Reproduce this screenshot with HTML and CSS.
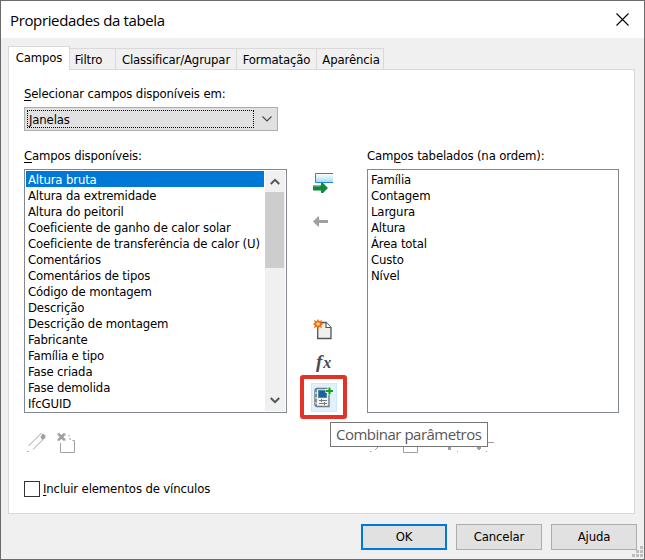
FILE: index.html
```html
<!DOCTYPE html>
<html lang="pt">
<head>
<meta charset="utf-8">
<title>Propriedades da tabela</title>
<link rel="stylesheet" href="styles.css">
</head>
<body>
<main class="dialog">
  <header class="titlebar">
    <h1 class="title">Propriedades da tabela</h1>
    <svg class="close" width="13" height="13" viewBox="0 0 13 13"><path d="M.5.5l12 12M12.500.5l-12 12" stroke="#000" stroke-width="1.1" fill="none"/></svg>
  </header>
  <nav class="tabs">
    <span class="tab active">Campos</span>
    <span class="tab filter">Filtro</span>
    <span class="tab sort">Classificar/Agrupar</span>
    <span class="tab format">Formatação</span>
    <span class="tab look">Aparência</span>
  </nav>
  <section class="panel">
    <div class="label select-label"><u>S</u>elecionar campos disponíveis em:</div>
    <div class="combo">
      <span class="combo-value">Janelas</span>
      <svg width="10" height="6" viewBox="0 0 10 6"><path d="M.5.5L5 5 9.500.5" fill="none" stroke="#444" stroke-width="1.1"/></svg>
    </div>
    <div class="columns">
      <div class="available">
        <div class="label available-label"><u>C</u>ampos disponíveis:</div>
        <div class="listbox">
          <ul class="items">
            <li class="selected">Altura bruta</li>
            <li>Altura da extremidade</li>
            <li>Altura do peitoril</li>
            <li>Coeficiente de ganho de calor solar</li>
            <li>Coeficiente de transferência de calor (U)</li>
            <li>Comentários</li>
            <li>Comentários de tipos</li>
            <li>Código de montagem</li>
            <li>Descrição</li>
            <li>Descrição de montagem</li>
            <li>Fabricante</li>
            <li>Família e tipo</li>
            <li>Fase criada</li>
            <li>Fase demolida</li>
            <li>IfcGUID</li>
          </ul>
          <div class="scrollbar">
            <div class="arrow"><svg width="10" height="7" viewBox="0 0 10 7"><path d="M.8 6L5 1.800 9.200 6" fill="none" stroke="#555" stroke-width="2"/></svg></div>
            <div class="thumb"></div>
            <div class="arrow down"><svg width="10" height="7" viewBox="0 0 10 7"><path d="M.8 1L5 5.200 9.200 1" fill="none" stroke="#555" stroke-width="2"/></svg></div>
          </div>
        </div>
      </div>
      <div class="actions">
        <svg class="add" width="20" height="20" viewBox="0 0 20 20">
          <defs><linearGradient id="row" x1="0" y1="0" x2="0" y2="1"><stop offset="0" stop-color="#fff"/><stop offset="1" stop-color="#a7d8f3"/></linearGradient></defs>
          <path d="M20 .5H2.500v9H20" fill="url(#row)" stroke="#1b8bc9"/>
          <path d="M0 12.500h8V10h2l5 5-5 5H8v-2.500H0z" fill="#118a3b"/><path d="M0 13h7" stroke="#73bd8c" stroke-width="1"/>
        </svg>
        <svg class="remove" width="15" height="11" viewBox="0 0 15 11"><path d="M0 5.500L5 .5h1V4h9v3H6v3.500H5z" fill="#a0a0a0"/></svg>
        <svg class="new" width="21" height="21" viewBox="0 0 21 21">
          <path d="M4.700 3.500h8.500l4.800 5v11H4.700z" fill="#f0f0f0" stroke="#555" stroke-width="1.300"/><path d="M13 3.500v5h5" fill="#fff" stroke="#555" stroke-width="1.200"/>
          <path d="M5 0l1.200 2.200L9 1l-.8 2.800L10.500 5l-2.300 1.300L9 9 6.200 8 5 10.500 3.700 8 1 9l.8-2.700L0 5l1.800-1.200L1 1l2.700 1.200z" fill="#f26b0b"/><circle cx="5" cy="5" r="1.800" fill="#ffda82"/>
        </svg>
        <div class="fx"><i>f</i><i class="x">x</i></div>
        <div class="combine">
          <svg width="20" height="21" viewBox="0 0 20 21">
            <path d="M1 4Q1 1.500 3 1.500h12v18H3Q1 19.500 1 17z" fill="#f2f3f5" stroke="#74797e" stroke-width="1.400"/>
            <path d="M2.200 2v17" stroke="#68727a" stroke-width="1.200"/><path d="M1 6h2M1 11h2M1 16h2" stroke="#fff"/>
            <rect x="4.500" y="3.500" width="8" height="7" fill="#17659a" stroke="#438fb9"/>
            <path d="M5 13.500h8M5 16.500h8M7.500 12v3M10.500 15v3" stroke="#74797e"/>
            <path d="M15.500 0v8M11.500 4h8" stroke="#fff" stroke-width="3.800"/><path d="M15.500.5v7M12 4h7" stroke="#10a02a" stroke-width="2.200"/>
          </svg>
        </div>
      </div>
      <div class="scheduled">
        <div class="label">Cam<u>p</u>os tabelados (na ordem):</div>
        <div class="listbox">
          <ul class="items">
            <li>Família</li>
            <li>Contagem</li>
            <li>Largura</li>
            <li>Altura</li>
            <li>Área total</li>
            <li>Custo</li>
            <li>Nível</li>
          </ul>
        </div>
      </div>
    </div>
    <div class="tools">
      <svg width="50" height="22" viewBox="0 0 50 22" fill="none" stroke="#a0a0a0">
        <path d="M1.500 14L14.500 1M6 17.500L18 5.500"/><path d="M13.500 4.500L16 1.500l2.500 2L18 6l-3 2z" fill="#a0a0a0" stroke="none"/><path d="M0 19.500h1.500"/>
        <path d="M31.500 2l6 6M37.500 2l-6 6" stroke-width="2.600"/><path d="M30 2h2M37 2h2M30 8h2M37 8h2M33.500 11v9.500h14v-12h-2M42 3v1.500M43 6v2"/>
      </svg>
      <svg width="126" height="22" viewBox="0 0 126 22" fill="none" stroke="#a0a0a0">
        <path d="M5 18l4-4"/><path d="M0 19.500h1.500M33.500 8v12.500h14V8M87 19.500h1M116 19.500h1M118 10.500h6"/>
        <path d="M78 15h3v3h-3zM107 15h4v2h-1v1h-2v-1h-1z" fill="#a0a0a0" stroke="none"/>
      </svg>
    </div>
    <label class="check"><span class="box"></span><span><u>I</u>ncluir elementos de vínculos</span></label>
    <div class="highlight"></div>
    <div class="tooltip"><span>Combinar parâmetros</span></div>
  </section>
  <footer class="buttons">
    <button class="primary">OK</button>
    <button>Cancelar</button>
    <button>Ajuda</button>
    <svg class="grip" width="11" height="11" viewBox="0 0 11 11" fill="#bdbdbd"><path d="M8 0h3v3H8zM8 4h3v3H8zM4 4h3v3H4zM8 8h3v3H8zM4 8h3v3H4zM0 8h3v3H0z"/></svg>
  </footer>
</main>
</body>
</html>
```
FILE: styles.css
```css
* { box-sizing: border-box; }

body {
  margin: 0;
  font: 13px/16px "DejaVu Sans Condensed", "DejaVu Sans", sans-serif;
  font-stretch: condensed;
  letter-spacing: -0.14px;
  color: #000;
}

.dialog {
  position: relative;
  width: 645px;
  height: 560px;
  border: 1px solid #6b6b6b;
  background: #f0f0f0;
}

.titlebar {
  height: 37px;
  padding: 0 15px 0 9px;
  display: flex;
  align-items: center;
  justify-content: space-between;
  background: #fff;
}

.title {
  margin: 0;
  font: 15px/20px "Open Sans", sans-serif;
  letter-spacing: -0.36px;
}

.tabs {
  height: 31px;
  padding-left: 7px;
  display: flex;
  align-items: flex-end;
}

.tab {
  height: 21px;
  padding-top: 3px;
  border: 1px solid #d9d9d9;
  border-width: 1px 1px 0 0;
  text-align: center;
  white-space: nowrap;
}

.tab.active {
  position: relative;
  z-index: 1;
  width: 62px;
  height: 24px;
  margin-bottom: -1px;
  border-left-width: 1px;
  background: #fff;
}

.filter { width: 46px; padding-right: 8px; }
.sort { width: 121px; }
.format { width: 80px; }
.look { width: 67px; padding-left: 2px; }

.panel {
  position: relative;
  width: 627px;
  height: 445px;
  margin-left: 7px;
  padding: 16px 15px 0;
  border: 1px solid #d9d9d9;
  background: #fff;
}

.label { height: 16px; white-space: nowrap; }

u { text-decoration-thickness: 1px; text-underline-offset: 2px; }

.combo {
  width: 254px;
  height: 24px;
  margin-top: 5px;
  padding: 2px 5px 2px 2px;
  border: 1px solid #adadad;
  display: flex;
  align-items: center;
  justify-content: space-between;
  background: #e1e1e1;
}

.combo-value {
  width: 227px;
  height: 18px;
  padding: 1px 0 0 1px;
  border: 1px dotted #000;
  line-height: 16px;
}

.columns { display: flex; margin-top: 17px; }
.available { width: 263px; }
.scheduled { width: 252px; }

.listbox {
  height: 244px;
  margin-top: 5px;
  padding: 1px;
  border: 1px solid #828790;
  display: flex;
}

.items {
  flex: 1;
  margin: 0;
  padding: 0;
  list-style: none;
}

.items li { height: 16px; padding: 1px 0 0 2px; white-space: nowrap; }
.items .selected { background: #0078d7; color: #fff; }

.scrollbar {
  width: 20px;
  margin-left: 1px;
  display: flex;
  flex-direction: column;
  background: #f0f0f0;
}

.arrow { height: 21px; display: flex; justify-content: center; align-items: center; }
.arrow.down { margin-top: auto; }
.thumb { width: 19px; height: 76px; background: #cdcdcd; }

.actions {
  width: 80px;
  padding: 25px 0 0 24px;
  display: flex;
  flex-direction: column;
}

.add { margin-left: 2px; }
.remove { margin: 23px 0 0 2px; }
.new { margin: 92px 0 0 2px; }

.fx {
  height: 20px;
  margin: 12px 0 0 5px;
  font: bold 19px/20px "Liberation Serif", serif;
  letter-spacing: 0;
  color: #4b4b4b;
}

.fx .x { margin-left: 1px; font-size: 16px; }

.combine {
  width: 26px;
  height: 29px;
  margin-top: 11px;
  padding: 3px 2px;
  border: 1px solid #cce8ff;
  background: #e0f1fc;
}

.combine svg { display: block; }

.tools { display: flex; gap: 293px; margin: 19px 0 0 3px; }

.check { display: flex; align-items: center; gap: 3px; margin-top: 27px; }
.box { width: 16px; height: 16px; border: 1px solid #333; background: #fff; }

.highlight {
  position: absolute;
  left: 291px;
  top: 305px;
  width: 47px;
  height: 44px;
  border: 4px solid #e33328;
  border-radius: 3px;
}

.tooltip {
  position: absolute;
  left: 321px;
  top: 352px;
  width: 158px;
  height: 25px;
  padding: 1px 5px;
  border: 1px solid #767676;
  background: #fff;
  font: 15px/21px "Open Sans", sans-serif;
  letter-spacing: -0.5px;
  color: #575757;
  white-space: nowrap;
}

.buttons { position: relative; display: flex; gap: 9px; padding: 10px 0 0 360px; }

button {
  width: 86px;
  height: 26px;
  padding: 0;
  border: 1px solid #adadad;
  background: #e1e1e1;
  font: inherit;
  letter-spacing: inherit;
  color: #000;
}

.primary { border: 2px solid #0078d7; }
.grip { position: absolute; right: 1px; bottom: -7px; }
```
